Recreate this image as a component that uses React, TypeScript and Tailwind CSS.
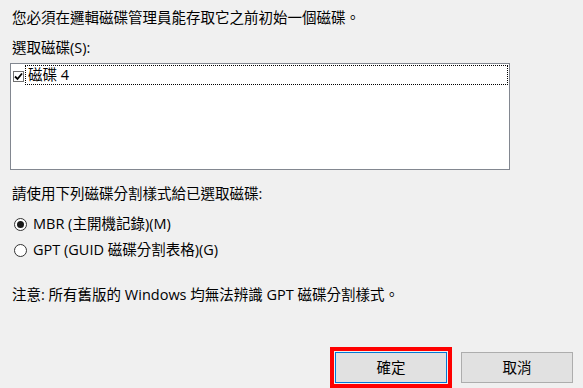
import React from "react";

const font = {
  fontFamily: '"Segoe UI", "Open Sans", "Noto Sans CJK TC", sans-serif',
};

function Radio({ checked }: { checked: boolean }) {
  return (
    <svg width="13" height="13" viewBox="0 0 13 13" className="shrink-0">
      <circle cx="6.5" cy="6.5" r="6" fill="#ffffff" stroke="#333333" strokeWidth="1" />
      {checked && <circle cx="6.5" cy="6.5" r="3.5" fill="#1a1a1a" />}
    </svg>
  );
}

export default function App() {
  return (
    <div
      className="w-[583px] h-[388px] bg-[#f0f0f0] text-black text-[14.5px] flex flex-col overflow-hidden"
      style={font}
    >
      <div className="pl-[12px] pt-[8px] h-[28px] leading-[20px] whitespace-nowrap">
        您必須在邏輯磁碟管理員能存取它之前初始一個磁碟。
      </div>
      <div className="pl-[12px] mt-[10px] h-[20px] leading-[20px] whitespace-nowrap">
        選取磁碟(S):
      </div>
      <div className="ml-[10px] mt-[5px] w-[500px] h-[107px] border border-[#828790] bg-white flex flex-col">
        <div className="flex items-start pt-[1px]">
          <div className="ml-[2px] mt-[6px] w-[11px] h-[11px] border border-[#707070] bg-white flex items-center justify-center shrink-0">
            <svg width="9" height="9" viewBox="0 0 9 9">
              <path d="M1 4.5 L3.5 7 L8 1.5" fill="none" stroke="#000" strokeWidth="1.8" />
            </svg>
          </div>
          <div className="ml-[1px] w-[483px] h-[20px] border border-dotted border-black leading-[18px] pl-[2px] whitespace-nowrap">
            磁碟 4
          </div>
        </div>
      </div>
      <div className="pl-[12px] mt-[14px] h-[20px] leading-[20px] whitespace-nowrap">
        請使用下列磁碟分割樣式給已選取磁碟:
      </div>
      <div className="pl-[14px] mt-[10px] h-[20px] flex items-center gap-[6px] whitespace-nowrap">
        <Radio checked />
        <span className="leading-[20px]">MBR (主開機記錄)(M)</span>
      </div>
      <div className="pl-[14px] mt-[6px] h-[20px] flex items-center gap-[6px] whitespace-nowrap">
        <Radio checked={false} />
        <span className="leading-[20px]">GPT (GUID 磁碟分割表格)(G)</span>
      </div>
      <div className="pl-[12px] mt-[25px] h-[20px] leading-[20px] whitespace-nowrap">
        注意: 所有舊版的 Windows 均無法辨識 GPT 磁碟分割樣式。
      </div>
      <div className="mt-[47px] flex justify-end gap-[14px] pr-[10px]">
        <button
          className="w-[112px] h-[31px] bg-[#e1e1e1] border border-[#0078d7] outline-[4px] outline-solid outline-[#ff0000] outline-offset-[1px] leading-[29px] text-center"
          style={font}
        >
          確定
        </button>
        <button
          className="w-[112px] h-[31px] bg-[#e1e1e1] border border-[#adadad] leading-[29px] text-center"
          style={font}
        >
          取消
        </button>
      </div>
    </div>
  );
}
